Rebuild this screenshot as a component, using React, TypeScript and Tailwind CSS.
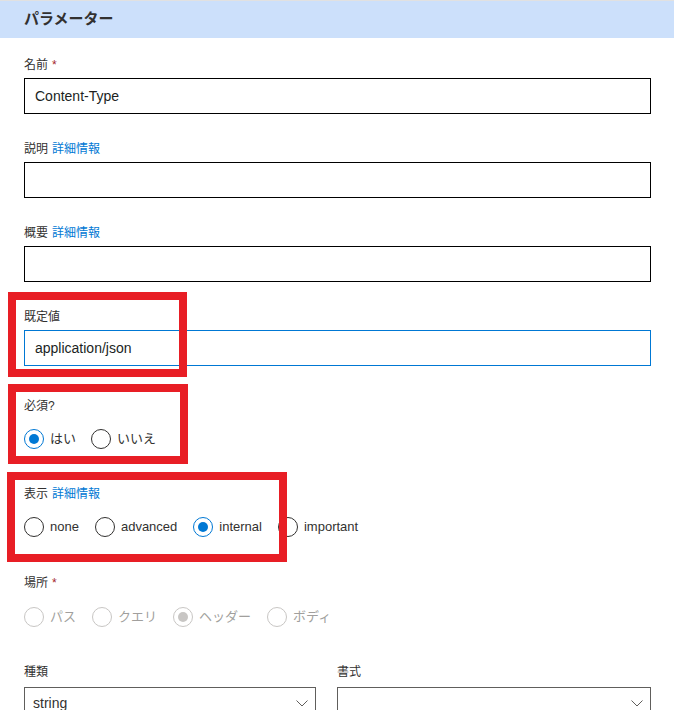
import type { ReactNode } from 'react'

const font = { fontFamily: '"Liberation Sans", "Noto Sans CJK JP", sans-serif' }

function Label({ children, required, more }: { children: ReactNode; required?: boolean; more?: boolean }) {
  return (
    <div className="h-4 text-[12px] leading-4 text-[#323130]">
      {children}
      {required ? <span className="ml-1 text-[#a4262c]">*</span> : null}
      {more ? <span className="ml-1 text-[#0078d4]">詳細情報</span> : null}
    </div>
  )
}

function TextField({ value, focused }: { value?: string; focused?: boolean }) {
  return (
    <div
      className={`mt-[5px] flex h-9 items-center border px-[10px] text-[14px] text-[#201f1e] ${
        focused ? 'border-[#0078d4]' : 'border-black'
      }`}
    >
      {value}
    </div>
  )
}

function Radio({ label, checked, disabled }: { label: string; checked?: boolean; disabled?: boolean }) {
  const ring = disabled ? 'border-[#c8c6c4]' : checked ? 'border-[#0078d4]' : 'border-[#323130]'
  const dot = disabled ? 'bg-[#c8c6c4]' : 'bg-[#0078d4]'
  return (
    <div className="flex h-5 items-center gap-[6px]">
      <span className={`flex h-5 w-5 items-center justify-center rounded-full border ${ring}`}>
        {checked ? <span className={`h-[10px] w-[10px] rounded-full ${dot}`} /> : null}
      </span>
      <span className={`text-[13px] ${disabled ? 'text-[#a19f9d]' : 'text-[#323130]'}`}>{label}</span>
    </div>
  )
}

function Select({ value }: { value?: string }) {
  return (
    <div className="mt-[7px] flex h-8 items-center justify-between border border-[#605e5c] pl-[8px] pr-[7px] text-[14px] text-[#323130]">
      <span>{value}</span>
      <svg width="12" height="7" viewBox="0 0 12 7" fill="none">
        <path d="M0.5 0.5 L6 6 L11.5 0.5" stroke="#605e5c" strokeWidth="1" />
      </svg>
    </div>
  )
}

export default function App() {
  return (
    <div className="relative h-[710px] w-[674px] overflow-hidden bg-white" style={font}>
      <div className="flex h-[38px] items-center border-t border-[#e1e1e1] bg-[#cce0fb] px-6 text-[15px] font-semibold text-[#323130]">
        パラメーター
      </div>

      <div className="pl-6 pr-[23px]">
        <div className="mt-[19px]">
          <Label required>名前</Label>
          <TextField value="Content-Type" />
        </div>
        <div className="mt-[27px]">
          <Label more>説明</Label>
          <TextField />
        </div>
        <div className="mt-[27px]">
          <Label more>概要</Label>
          <TextField />
        </div>
        <div className="mt-[27px]">
          <Label>既定値</Label>
          <TextField value="application/json" focused />
        </div>

        <div className="mt-[32px]">
          <Label>必須?</Label>
          <div className="mt-[15px] flex gap-[15px]">
            <Radio label="はい" checked />
            <Radio label="いいえ" />
          </div>
        </div>

        <div className="mt-[37px]">
          <Label more>表示</Label>
          <div className="mt-[15px] flex gap-4">
            <Radio label="none" />
            <Radio label="advanced" />
            <Radio label="internal" checked />
            <Radio label="important" />
          </div>
        </div>

        <div className="mt-[38px]">
          <Label required>場所</Label>
          <div className="mt-4 flex gap-4">
            <Radio label="パス" disabled />
            <Radio label="クエリ" disabled />
            <Radio label="ヘッダー" checked disabled />
            <Radio label="ボディ" disabled />
          </div>
        </div>

        <div className="mt-[37px] grid grid-cols-[292px_1fr] gap-x-[21px]">
          <div>
            <Label>種類</Label>
            <Select value="string" />
          </div>
          <div>
            <Label>書式</Label>
            <Select />
          </div>
        </div>
      </div>

      {/* annotation boxes */}
      <div className="pointer-events-none absolute left-[8px] top-[292px] h-[85px] w-[179px] border-8 border-[#e81e25]" />
      <div className="pointer-events-none absolute left-[8px] top-[384px] h-[80px] w-[180px] border-8 border-[#e81e25]" />
      <div className="pointer-events-none absolute left-[7px] top-[472px] h-[90px] w-[280px] border-8 border-[#e81e25]" />
    </div>
  )
}
